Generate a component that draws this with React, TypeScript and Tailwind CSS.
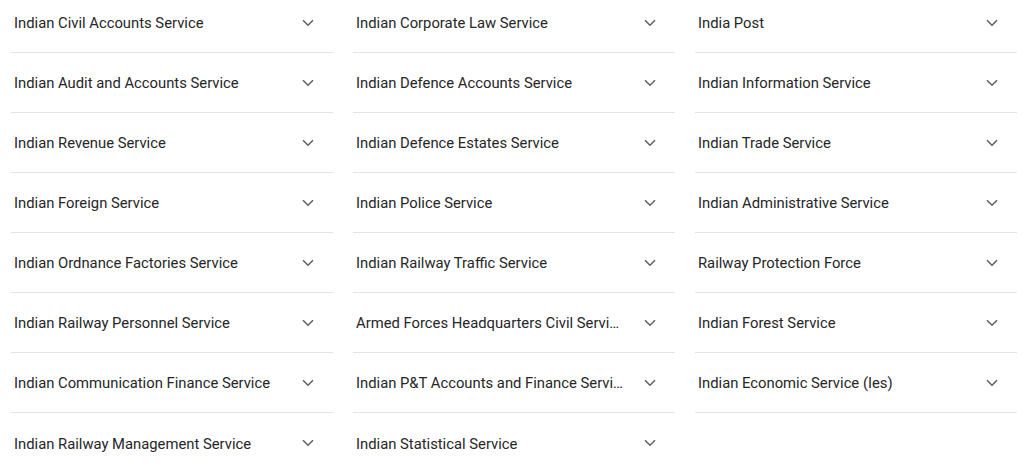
const columns: string[][] = [
  [
    'Indian Civil Accounts Service',
    'Indian Audit and Accounts Service',
    'Indian Revenue Service',
    'Indian Foreign Service',
    'Indian Ordnance Factories Service',
    'Indian Railway Personnel Service',
    'Indian Communication Finance Service',
    'Indian Railway Management Service',
  ],
  [
    'Indian Corporate Law Service',
    'Indian Defence Accounts Service',
    'Indian Defence Estates Service',
    'Indian Police Service',
    'Indian Railway Traffic Service',
    'Armed Forces Headquarters Civil Services',
    'Indian P&T Accounts and Finance Service',
    'Indian Statistical Service',
  ],
  [
    'India Post',
    'Indian Information Service',
    'Indian Trade Service',
    'Indian Administrative Service',
    'Railway Protection Force',
    'Indian Forest Service',
    'Indian Economic Service (Ies)',
  ],
];

function Chevron() {
  return (
    <svg width="12" height="8" viewBox="0 0 12 8" className="shrink-0 text-[#5f6368]">
      <path d="M1 1.2 6 6.2 11 1.2" fill="none" stroke="currentColor" strokeWidth="1.6" />
    </svg>
  );
}

function Row({ label, last }: { label: string; last: boolean }) {
  return (
    <div
      className={`flex h-[60px] items-center justify-between pl-[3px] pr-[19px] ${
        last ? '' : 'border-b border-[#e3e3e3]'
      }`}
    >
      <span className="truncate pt-[2px] pr-5 text-[14.8px] text-[#262626]">{label}</span>
      <Chevron />
    </div>
  );
}

export default function App() {
  return (
    <div
      className="h-[474px] w-[1024px] overflow-hidden bg-white"
      style={{ fontFamily: 'Roboto, "Noto Sans", sans-serif' }}
    >
      <div className="-mt-[7px] grid grid-cols-3 gap-x-5 pl-[11px] pr-[7px]">
        {columns.map((col, ci) => (
          <div key={ci} className="flex min-w-0 flex-col">
            {col.map((label, i) => (
              <Row key={label} label={label} last={ci !== 2 && i === col.length - 1} />
            ))}
          </div>
        ))}
      </div>
    </div>
  );
}
